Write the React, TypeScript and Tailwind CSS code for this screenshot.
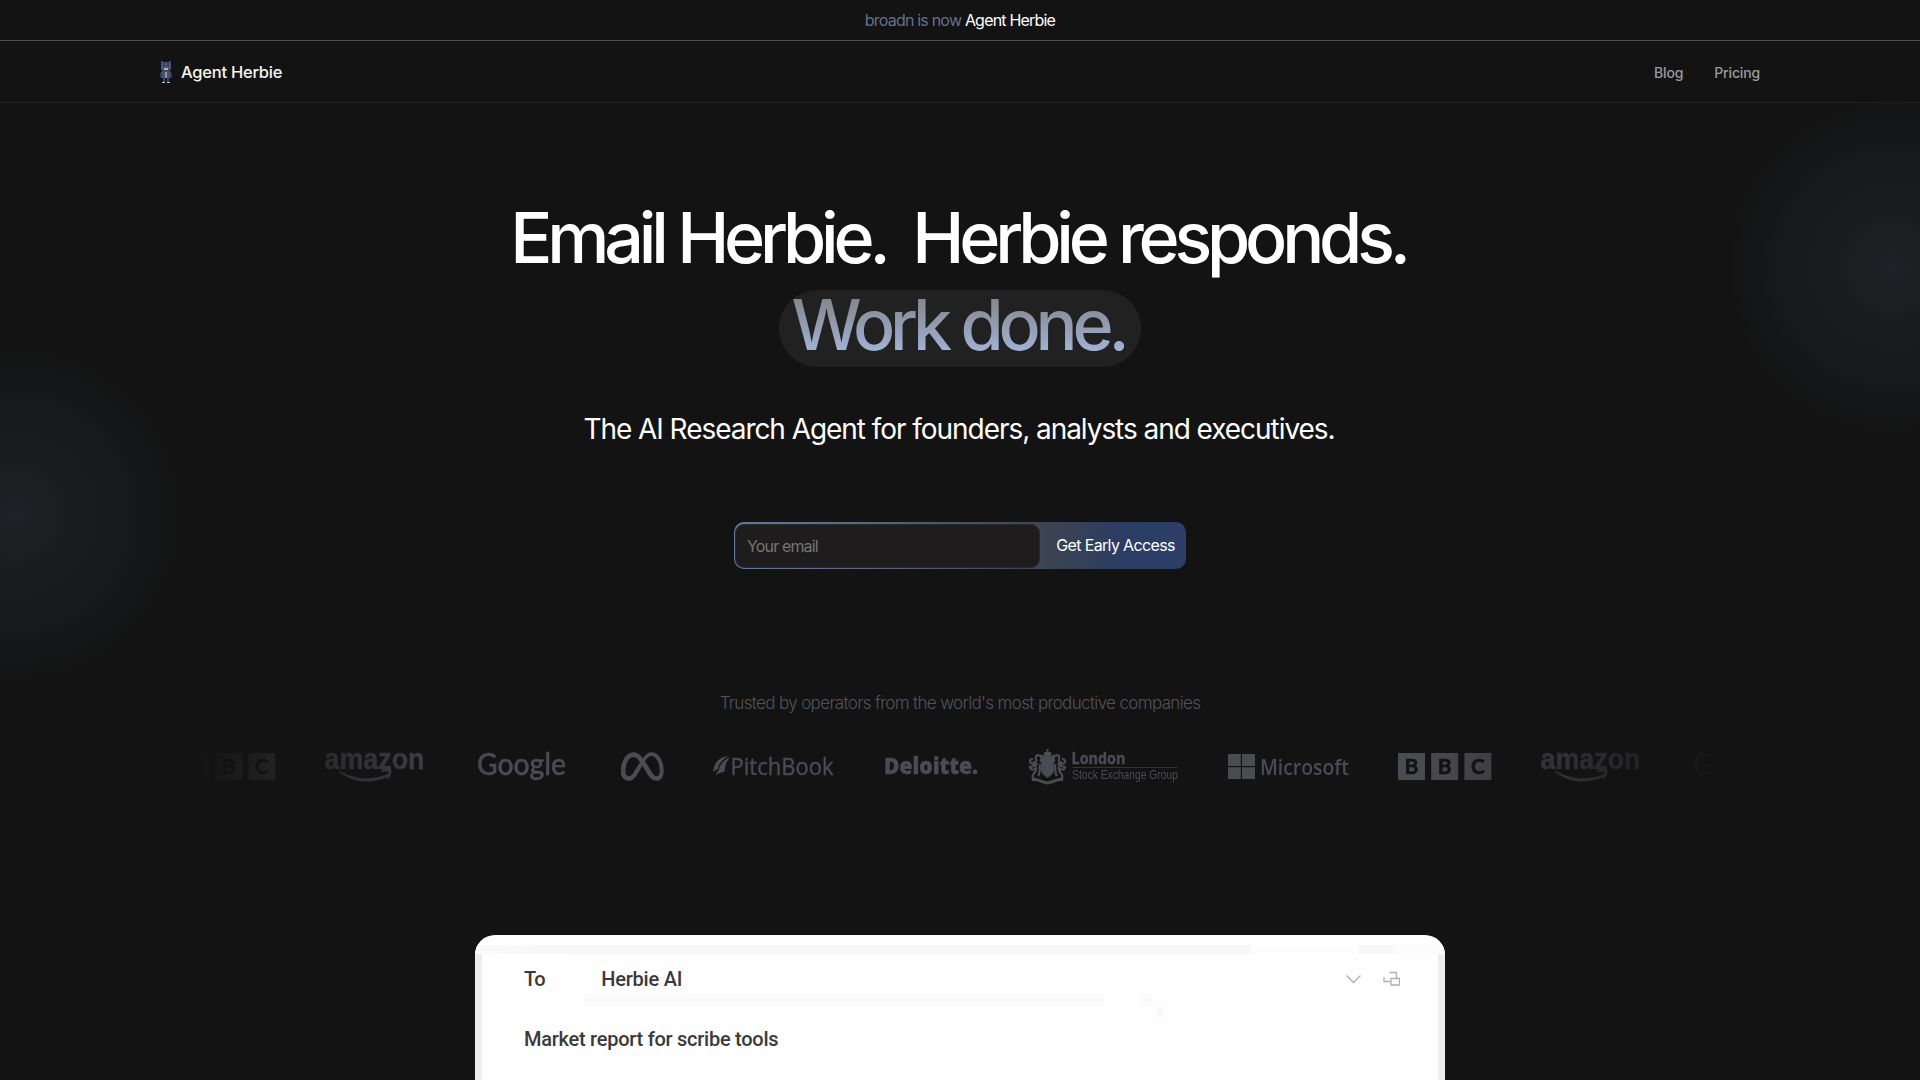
import type { ReactNode } from "react";
import { SiMeta } from "react-icons/si";

function Mascot() {
  return (
    <svg width="12" height="24" viewBox="0 0 12 24" shapeRendering="crispEdges">
      <path d="M1 1h2v1h6V1h2v5H1z" fill="#3b4a70" />
      <path d="M1 4h10v5H1z" fill="#4e5675" />
      <path d="M3 5h2v1H3zM7 5h2v1H7z" fill="#22253a" />
      <path d="M4 8h4v2H4z" fill="#b9a9a6" />
      <path d="M1 9h3v1H1zM8 9h3v1H8zM2 10h8v2H2z" fill="#4a4658" />
      <path d="M1 12h10v6H1z" fill="#3b5286" />
      <path d="M0 13h2v4H0zM10 13h2v4h-2z" fill="#2d406c" />
      <path d="M5 12h2v6H5z" fill="#a8905f" />
      <path d="M3 18h2v4H3zM7 18h2v4H7z" fill="#33497c" />
      <path d="M2 22h3v1H2zM7 22h3v1H7z" fill="#c9c6bd" />
    </svg>
  );
}

function Cell({ w, children }: { w: number; children: ReactNode }) {
  return (
    <svg width={w} height="38" viewBox={`0 0 ${w} 38`} fill="#4b4b52" className="shrink-0 overflow-visible">
      {children}
    </svg>
  );
}

function Bbc() {
  return (
    <Cell w={143}>
      {["B", "B", "C"].map((c, i) => (
        <g key={i}>
          <rect x={i * 33.2} y="5" width="27" height="27" />
          <text x={i * 33.2 + 13.5} y="26" textAnchor="middle" fontFamily="Lato, sans-serif" fontWeight="700" fontSize="21" fill="#131313" stroke="#131313" strokeWidth=".5">
            {c}
          </text>
        </g>
      ))}
    </Cell>
  );
}

function Amazon() {
  return (
    <Cell w={153}>
      <text x="-0.5" y="20.8" fontFamily="Liberation Sans, sans-serif" fontWeight="700" fontSize="30" textLength="100" lengthAdjust="spacingAndGlyphs" stroke="#4b4b52" strokeWidth=".5">
        amazon
      </text>
      <path d="M14 22.5C30 32 49 32.500 64 25.500l1.200 1.800C52 35.500 29 37 13.500 23.500z" />
      <path d="M56 22.500c3-2 7.500-2.500 10.300-1.500.6 3-.6 7.500-3.300 10.300l-1.300-.6c1.200-2.500 2-5 1.600-6.700-1.500-.7-4-.6-6.800 0z" />
    </Cell>
  );
}

function Google() {
  return (
    <Cell w={143}>
      <text x="-1" y="26.8" fontFamily="Lato, sans-serif" fontWeight="500" fontSize="30" textLength="89" lengthAdjust="spacingAndGlyphs" stroke="#4b4b52" strokeWidth=".5">
        Google
      </text>
    </Cell>
  );
}

function Meta() {
  return (
    <Cell w={92}>
      <g transform="translate(-0.2 -3)">
        <SiMeta size={43} color="#4b4b52" />
      </g>
    </Cell>
  );
}

function PitchBook() {
  return (
    <Cell w={172}>
      <path d="M15.5 8.500C7 8.500 1 14 0 24c2-1.500 3.500-2.500 5-3 .7-5 4-9.500 10.500-12.500z" />
      <path d="M17 9.200C11 11.500 6.500 17 5.800 22 4.500 23.500 3 26 2.500 27.500c2.500-2.500 5.500-3.300 9-3.800C12 18 13.500 13 17 9.200z" />
      <text x="17.5" y="27" fontFamily="Open Sans, sans-serif" fontSize="23" textLength="103" lengthAdjust="spacingAndGlyphs" stroke="#4b4b52" strokeWidth=".4">
        PitchBook
      </text>
    </Cell>
  );
}

function Deloitte() {
  return (
    <Cell w={144}>
      <text x="-1" y="26" fontFamily="Open Sans, sans-serif" fontWeight="800" fontSize="23" textLength="94" lengthAdjust="spacingAndGlyphs" stroke="#4b4b52" strokeWidth=".4">
        Deloitte.
      </text>
    </Cell>
  );
}

function London() {
  return (
    <Cell w={199}>
      <path d="M17.5 1h2v3h2l1 2-1 2.500 3-2 3 1-2 2.500 1 3-2 2 1 6-2 5-5 4-5-4-2-5 1-6-2-2 1-3-2-2.500 3-1 3 2-1-2.500 1-2h2z" />
      <g fill="none" stroke="#4b4b52" strokeWidth="2.2">
        <path d="M11 8c-3-2-5 0-4 3s-1 4-3 3M4 11c-4 0-4 4 0 5l4 0M8 15c-1 4-4 3-7 4 1 4 4 3 6 1 1 4-2 4-3 7s0 4 3 4M11 16c-1 4 1 9-2 12M26 8c3-2 5 0 4 3s1 4 3 3M33 11c4 0 4 4 0 5l-4 0M29 15c1 4 4 3 7 4-1 4-4 3-6 1-1 4 2 4 3 7s0 4-3 4M26 16c1 4-1 9 2 12" />
        <path d="M3 32c5-2 9 2 15.500 3 6.500-1 10.500-5 15.500-3" strokeWidth="3" />
      </g>
      <text x="42.5" y="16.3" fontFamily="Open Sans, sans-serif" fontWeight="700" fontSize="16" textLength="54" lengthAdjust="spacingAndGlyphs" stroke="#4b4b52" strokeWidth=".4">
        London
      </text>
      <rect x="43.5" y="19" width="105" height="1" opacity=".6" />
      <text x="43" y="31" fontFamily="Liberation Sans, sans-serif" fontSize="12.5" textLength="106" lengthAdjust="spacingAndGlyphs">
        Stock Exchange Group
      </text>
    </Cell>
  );
}

function Microsoft() {
  return (
    <Cell w={170}>
      <path d="M0 6h12.800v12H0zM14 6h13v12H14zM0 19.200h12.800V31H0zM14 19.200h13V31H14z" />
      <text x="32" y="26.800" fontFamily="Open Sans, sans-serif" fontWeight="600" fontSize="21" textLength="89" lengthAdjust="spacingAndGlyphs">
        Microsoft
      </text>
    </Cell>
  );
}

export default function App() {
  return (
    <div className="flex h-[1080px] flex-col overflow-hidden bg-[#131313] font-['Inter',sans-serif] text-white">
      <div className="flex h-[41px] shrink-0 items-center justify-center border-b border-[#505050] text-base tracking-[-0.8px]">
        <p>
          <span className="text-[#64708f]">broadn is now</span> <span>Agent Herbie</span>
        </p>
      </div>

      <header className="h-[62px] shrink-0 border-b border-[#1e1e1e]">
        <div className="mx-auto flex h-full w-[1600px] items-center justify-between">
          <div className="flex items-center gap-[9px]">
            <Mascot />
            <span className="text-[16.5px] leading-6 font-medium tracking-[-0.25px] text-[#f5f5ec]">Agent Herbie</span>
          </div>
          <nav className="flex gap-[31px] pt-0.5 text-sm font-medium tracking-[-0.15px] text-[#9b9b9b]">
            <a>Blog</a>
            <a>Pricing</a>
          </nav>
        </div>
      </header>

      <main className="flex grow flex-col items-center bg-[radial-gradient(circle_170px_at_1893px_164px,#202126,#1b1c1e_35%,#16181a_70%,#13131300),radial-gradient(circle_170px_at_15px_411px,#202126,#1b1c1e_35%,#16181a_70%,#13131300)]">
        <h1 className="mt-[91px] flex flex-col items-center text-[70px] font-medium tracking-[-5.2px]">
          <span className="mr-[4px] leading-[87px] whitespace-pre">Email Herbie.&nbsp; Herbie responds.</span>
          <span className="mt-[9px] flex h-[77px] w-[362px] justify-center rounded-[38px] bg-[#212121]">
            <span className="bg-gradient-to-b from-[#808080] to-[#a9bfec] bg-clip-text pr-1 leading-[70px] text-transparent">Work done.</span>
          </span>
        </h1>
        <p className="mt-[42px] mr-[2px] text-[28px] leading-[40px] tracking-[-1.05px]">The AI Research Agent for founders, analysts and executives.</p>

        <form className="mt-[73px] flex h-[47px] w-[452px] items-center rounded-[10px] bg-[linear-gradient(90deg,#65779f,#5a6580_30%,#40495a_62%,#3c4452_70%,#2c3d63_85%,#2d3f68)] pl-px">
          <div className="flex h-[44px] w-[305px] items-center rounded-[9px] border border-[#2a2a2b] bg-[#1f1c1d] pl-[11px] text-base tracking-[-0.85px] text-[#757575]">Your email</div>
          <button type="button" className="grow pb-0.5 pl-[5px] text-base tracking-[-0.65px]">
            Get Early Access
          </button>
        </form>

        <p className="mt-[121px] text-[17px] leading-[26px] font-light tracking-[-0.65px] text-[#52525b]">
          Trusted by operators from the world's most productive companies
        </p>

        <div className="mt-[32px] flex w-[1536px] overflow-hidden [mask-image:linear-gradient(90deg,transparent,black_20%,black_80%,transparent)]">
          <div className="-ml-[10px] flex">
            <Bbc />
            <Amazon />
            <Google />
            <Meta />
            <PitchBook />
            <Deloitte />
            <London />
            <Microsoft />
            <Bbc />
            <Amazon />
            <Google />
          </div>
        </div>

        <section className="mt-[149px] h-[160px] w-[970px] shrink-0 overflow-hidden rounded-t-[20px] bg-white pt-[10px] font-['Roboto',sans-serif] text-[20px] font-medium text-[#3a3a3a]">
          <div className="h-[9px] bg-[linear-gradient(90deg,#fafafa,#f7f7f7_10%,#f7f7f7_80%,#fdfdfd_80%,#fdfdfd_91%,#f8f8f8_91%,#f8f8f8_95%,#fcfcfc_95%)]" />
          <div className="h-full border-x-[7px] border-[#eeeeee] bg-[#fefefe] bg-[linear-gradient(#fafafa,#fafafa),linear-gradient(#fafafa,#fafafa),linear-gradient(#f9f9f9,#f9f9f9)] bg-[length:521px_12px,11px_12px,6px_12px] bg-[position:102px_40px,660px_40px,675px_52px] bg-no-repeat pr-[38px] pl-[42px]">
            <div className="flex h-[50px] items-center">
              <span className="mr-[56px] tracking-[-0.5px]">To</span>
              <span className="tracking-[-0.2px]">Herbie AI</span>
              <svg className="ml-auto" width="54" height="16" viewBox="0 0 54 16" fill="none" stroke="#b0b0b0" strokeWidth="1.3">
                <path d="M.5 4.500l7 7 7-7M38 6v4.500h6M43.500 1.500h7V7M45 7.500h8.500V14H45z" />
              </svg>
            </div>
            <p className="pt-[20px] leading-[30px] tracking-[-0.26px]">Market report for scribe tools</p>
          </div>
        </section>
      </main>
    </div>
  );
}
